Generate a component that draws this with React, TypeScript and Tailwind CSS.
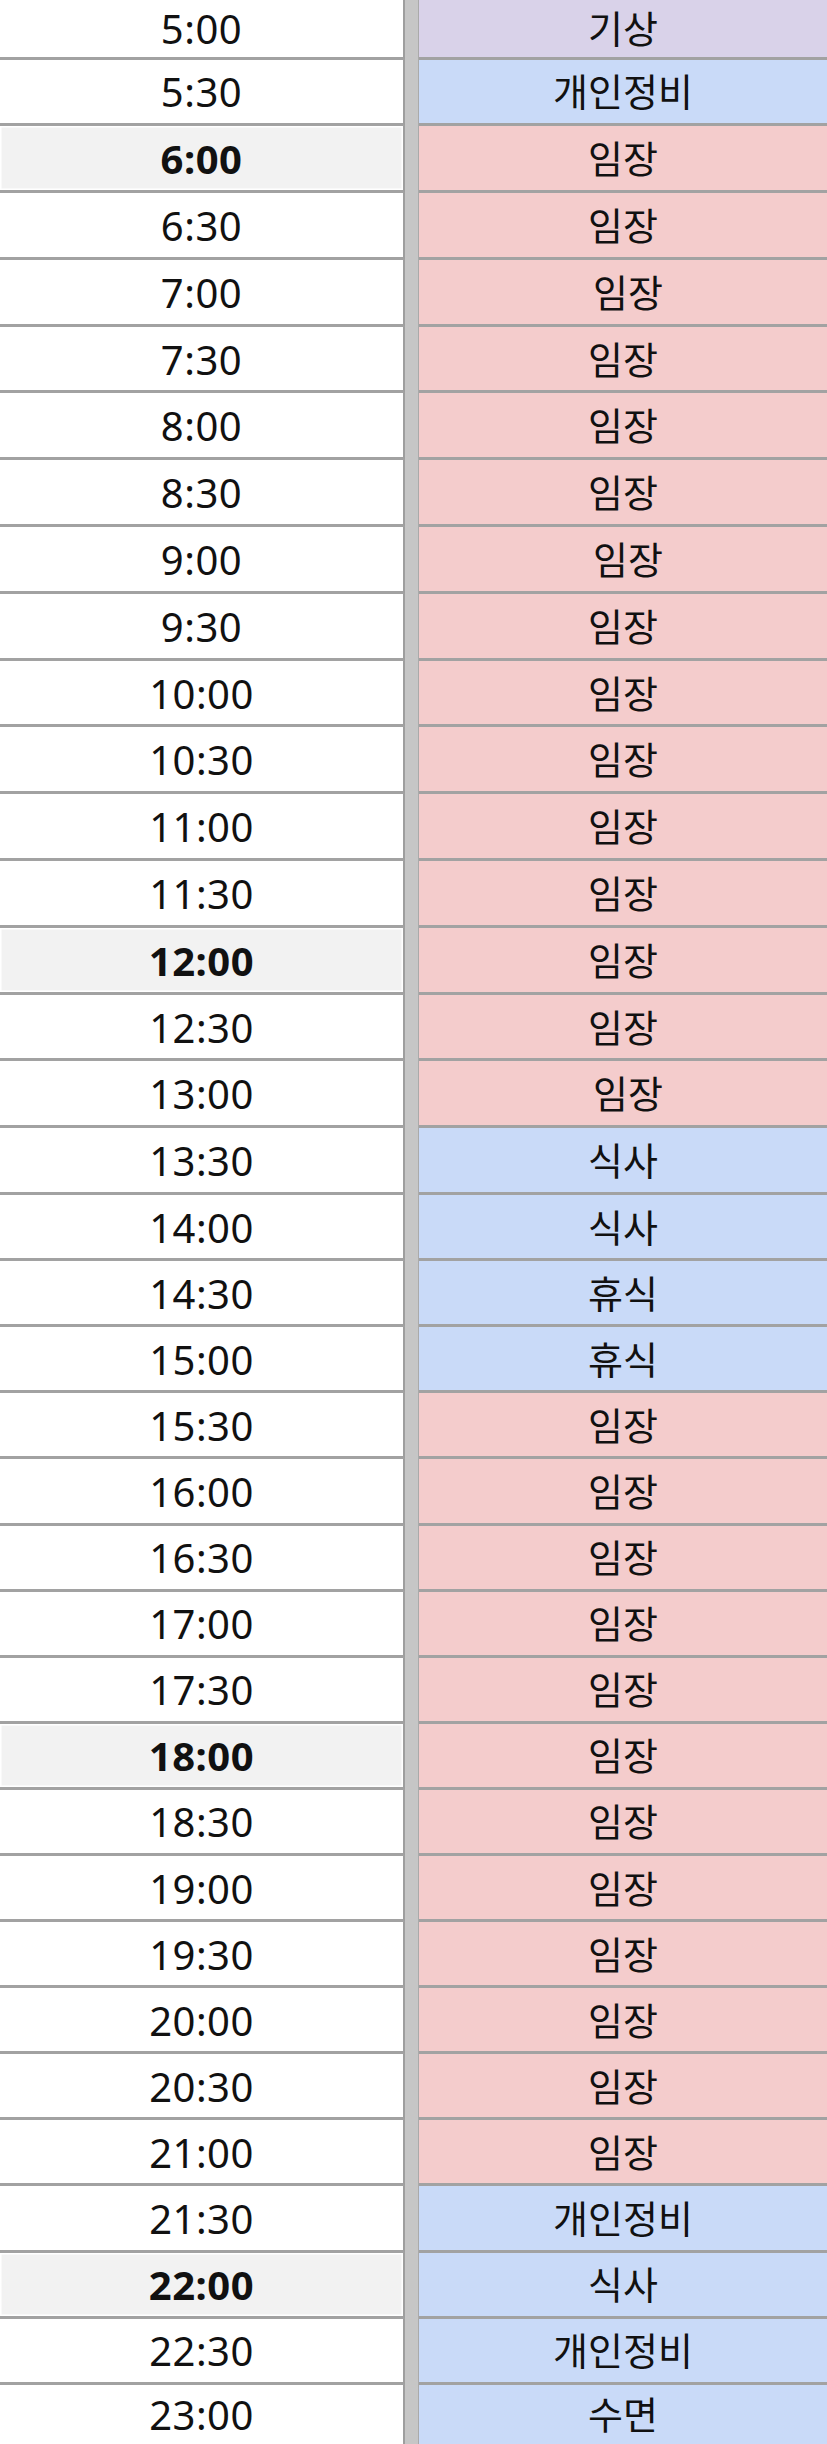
import React from "react";

type Kind = "purple" | "blue" | "red";

const rows: [string, string, Kind, boolean?][] = [
  ["5:00", "기상", "purple"],
  ["5:30", "개인정비", "blue"],
  ["6:00", "임장", "red", true],
  ["6:30", "임장", "red"],
  ["7:00", " 임장", "red"],
  ["7:30", "임장", "red"],
  ["8:00", "임장", "red"],
  ["8:30", "임장", "red"],
  ["9:00", " 임장", "red"],
  ["9:30", "임장", "red"],
  ["10:00", "임장", "red"],
  ["10:30", "임장", "red"],
  ["11:00", "임장", "red"],
  ["11:30", "임장", "red"],
  ["12:00", "임장", "red", true],
  ["12:30", "임장", "red"],
  ["13:00", " 임장", "red"],
  ["13:30", "식사", "blue"],
  ["14:00", "식사", "blue"],
  ["14:30", "휴식", "blue"],
  ["15:00", "휴식", "blue"],
  ["15:30", "임장", "red"],
  ["16:00", "임장", "red"],
  ["16:30", "임장", "red"],
  ["17:00", "임장", "red"],
  ["17:30", "임장", "red"],
  ["18:00", "임장", "red", true],
  ["18:30", "임장", "red"],
  ["19:00", "임장", "red"],
  ["19:30", "임장", "red"],
  ["20:00", "임장", "red"],
  ["20:30", "임장", "red"],
  ["21:00", "임장", "red"],
  ["21:30", "개인정비", "blue"],
  ["22:00", "식사", "blue", true],
  ["22:30", "개인정비", "blue"],
  ["23:00", "수면", "blue"],
];

const bgFor: Record<Kind, string> = {
  purple: "bg-[#d9d2e9]",
  blue: "bg-[#c9daf8]",
  red: "bg-[#f4cccc]",
};

export default function App() {
  const font = {
    fontFamily:
      '"Noto Sans", "Noto Sans CJK KR", "Liberation Sans", sans-serif',
  };
  return (
    <div
      className="w-[827px] h-[2444px] overflow-hidden bg-white flex flex-col text-[38px] text-[#111] leading-none"
      style={font}
    >
      {rows.map(([time, label, kind, bold], i) => {
        const last = i === rows.length - 1;
        const hClass =
          i === 0
            ? "h-[59.5px] shrink-0"
            : last
            ? "flex-1"
            : i <= 17
            ? "h-[66.8px] shrink-0"
            : "h-[66.1px] shrink-0";
        return (
          <div key={time} className={`flex ${hClass}`}>
            <div
              className={`w-[405px] shrink-0 flex items-center justify-center border-r-2 border-r-[#9e9e9e] ${
                last ? "" : "border-b-[3px] border-b-[#a2a2a2]"
              } ${
                bold
                  ? "bg-[#f2f2f2] font-bold shadow-[inset_0_0_0_1.5px_#ffffff]"
                  : "bg-white"
              }`}
            >
              <span className="pt-[2px] text-[40px] tracking-[0.5px]">{time}</span>
            </div>
            <div className="w-[14px] shrink-0 bg-[#c6c6c6] border-r border-r-[#aaaaaa]" />
            <div
              className={`flex-1 flex items-center justify-center ${bgFor[kind]} ${
                last ? "" : "border-b-[3px] border-b-[#a2a2a2]"
              }`}
            >
              <span className="whitespace-pre">{label}</span>
            </div>
          </div>
        );
      })}
    </div>
  );
}
